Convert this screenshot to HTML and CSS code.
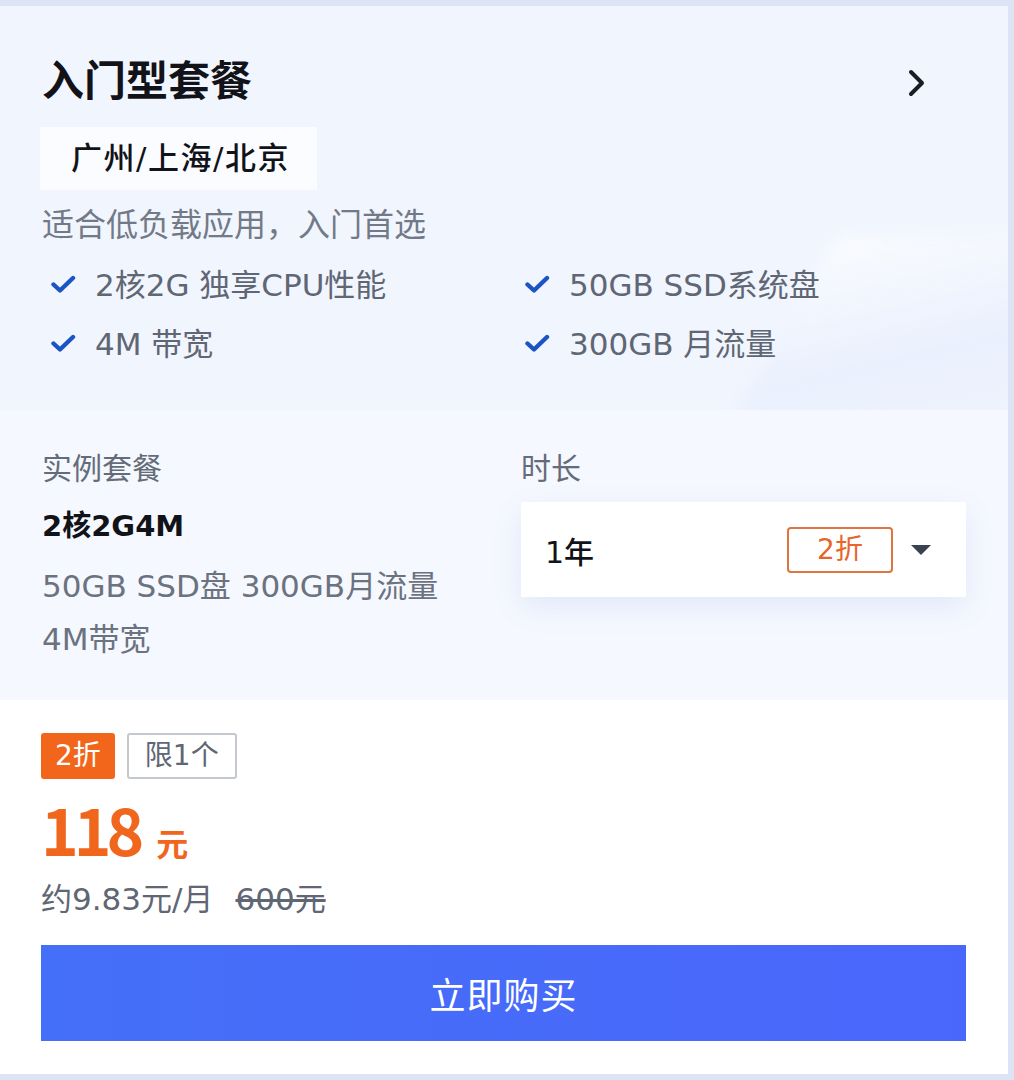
FILE: index.html
```html
<!DOCTYPE html>
<html lang="zh-CN">
    <head>
        <meta charset="UTF-8" />
        <meta name="viewport" content="width=device-width, initial-scale=1.0" />
        <title>入门型套餐</title>
        <link rel="stylesheet" href="styles.css">
    </head>
    <body>
        <div class="card">
            <section class="intro">
                <div class="title-row">
                    <h1>入门型套餐</h1>
                    <svg class="chevron" width="22" height="28" viewBox="0 0 22 28">
                        <path d="M5 3 L16 14 L5 25" fill="none" stroke="#1b1d22" stroke-width="4" stroke-linecap="round" stroke-linejoin="round" />
                    </svg>
                </div>
                <div class="region">广州/上海/北京</div>
                <p class="desc">适合低负载应用，入门首选</p>
                <ul class="features">
                    <li><svg class="check" width="26" height="18" viewBox="0 0 26 18"><path d="M3.5 9.5 L10 15.5 L23 3" fill="none" stroke="#1b55c4" stroke-width="4.4" stroke-linecap="round" stroke-linejoin="round" /></svg>2核2G 独享CPU性能</li>
                    <li><svg class="check" width="26" height="18" viewBox="0 0 26 18"><path d="M3.5 9.5 L10 15.5 L23 3" fill="none" stroke="#1b55c4" stroke-width="4.4" stroke-linecap="round" stroke-linejoin="round" /></svg>50GB SSD系统盘</li>
                    <li><svg class="check" width="26" height="18" viewBox="0 0 26 18"><path d="M3.5 9.5 L10 15.5 L23 3" fill="none" stroke="#1b55c4" stroke-width="4.4" stroke-linecap="round" stroke-linejoin="round" /></svg>4M 带宽</li>
                    <li><svg class="check" width="26" height="18" viewBox="0 0 26 18"><path d="M3.5 9.5 L10 15.5 L23 3" fill="none" stroke="#1b55c4" stroke-width="4.4" stroke-linecap="round" stroke-linejoin="round" /></svg>300GB 月流量</li>
                </ul>
            </section>

            <section class="config">
                <div class="col">
                    <div class="label">实例套餐</div>
                    <div class="spec-name">2核2G4M</div>
                    <div class="spec-detail">50GB SSD盘 300GB月流量<br />4M带宽</div>
                </div>
                <div class="col">
                    <div class="label">时长</div>
                    <div class="select">
                        <span class="select-value">1年</span>
                        <span class="select-tag">2折</span>
                        <span class="caret"></span>
                    </div>
                </div>
            </section>

            <section class="buy">
                <div class="tags">
                    <span class="tag tag-off">2折</span>
                    <span class="tag tag-limit">限1个</span>
                </div>
                <div class="price"><span class="num">118</span><span class="unit">元</span></div>
                <div class="per-month">约9.83元/月<s>600元</s></div>
                <button class="btn">立即购买</button>
            </section>
        </div>
    </body>
</html>
```

FILE: styles.css
```css
* {
    margin: 0;
    padding: 0;
    box-sizing: border-box;
}
body {
    background: #dce4f5;
    padding: 6px 6px 6px 0;
    font-family: "DejaVu Sans", "Noto Sans CJK SC", sans-serif;
}
.card {
    width: 1008px;
    height: 1068px;
    background: #fff;
    display: flex;
    flex-direction: column;
    overflow: hidden;
}

/* 上半部分 */
.intro {
    position: relative;
    height: 404px;
    padding: 55px 42px 0;
    background: #f1f5fe;
    overflow: hidden;
}
.intro::after {
    /* 右侧淡淡的装饰 */
    content: "";
    position: absolute;
    right: -40px;
    top: 230px;
    width: 280px;
    height: 240px;
    background: linear-gradient(165deg, rgba(255, 255, 255, 0.8), rgba(228, 236, 252, 0.7) 50%, rgba(241, 245, 254, 0));
    transform: skewX(-30deg);
    filter: blur(8px);
    opacity: 0.8;
}
.title-row {
    display: flex;
    align-items: center;
    justify-content: space-between;
    padding-right: 38px;
}
h1 {
    font-size: 42px;
    line-height: 42px;
    font-weight: 700;
    color: #111318;
}
.chevron {
    margin-top: 1px;
}
.region {
    display: inline-block;
    margin-top: 24px;
    height: 63px;
    line-height: 63px;
    padding: 0 27px 0 31px;
    margin-left: -2px;
    background: #fbfcff;
    font-size: 31px;
    font-weight: 500;
    letter-spacing: 1.5px;
    color: #111318;
}
.desc {
    margin-top: 15px;
    font-size: 32px;
    line-height: 40px;
    color: #737a87;
}
.features {
    position: relative;
    z-index: 1;
    list-style: none;
    margin-top: 8px;
    display: grid;
    grid-template-columns: 474px 1fr;
}
.features li {
    height: 59px;
    display: flex;
    align-items: center;
    font-size: 31px;
    color: #5f6674;
}
.check {
    margin: 2px 19px 0 8px;
}

/* 中间配置 */
.config {
    height: 290px;
    padding: 36px 42px 0;
    background: #f5f8fe;
    display: grid;
    grid-template-columns: 479px 445px;
}
.label {
    font-family: "Noto Sans CJK SC", sans-serif;
    font-size: 30px;
    line-height: 40px;
    color: #656c79;
}
.spec-name {
    margin-top: 20px;
    font-size: 29px;
    line-height: 40px;
    font-weight: 600;
    color: #111318;
}
.spec-detail {
    margin-top: 14px;
    font-size: 31px;
    line-height: 53px;
    color: #6b7280;
}
.select {
    margin-top: 16px;
    height: 95px;
    background: #fff;
    box-shadow: 0 10px 28px rgba(90, 120, 210, 0.12);
    display: flex;
    align-items: center;
    padding: 0 35px 0 24px;
}
.select-value {
    flex: 1;
    font-size: 30px;
    font-weight: 500;
    color: #111318;
}
.select-tag {
    width: 106px;
    height: 46px;
    line-height: 42px;
    text-align: center;
    border: 2px solid #e0743e;
    border-radius: 4px;
    font-size: 28px;
    color: #e8652a;
}
.caret {
    margin-left: 18px;
    width: 0;
    height: 0;
    border-left: 10px solid transparent;
    border-right: 10px solid transparent;
    border-top: 10px solid #3a4150;
}

/* 价格与购买 */
.buy {
    flex: 1;
    padding: 33px 42px 0 41px;
    background: #fff;
}
.tags {
    display: flex;
    gap: 12px;
}
.tag {
    height: 46px;
    line-height: 42px;
    padding: 0 12px;
    border-radius: 3px;
    font-size: 28px;
}
.tag-off {
    background: #f2661b;
    border: 2px solid #f2661b;
    color: #fff;
}
.tag-limit {
    border: 2px solid #c4c8cf;
    color: #5f6674;
    padding: 0 16px;
}
.price {
    margin-top: 15px;
    color: #f0661d;
    line-height: 68px;
    height: 68px;
    font-family: "Noto Sans CJK SC", sans-serif;
}
.num {
    font-size: 64px;
    font-weight: 600;
    letter-spacing: -5px;
}
.unit {
    margin-left: 17px;
    font-size: 32px;
    font-weight: 700;
}
.per-month {
    margin-top: 17px;
    font-size: 31px;
    line-height: 40px;
    color: #5f6674;
}
.per-month s {
    margin-left: 22px;
}
.btn {
    display: block;
    margin-top: 26px;
    width: 925px;
    height: 96px;
    border: none;
    background: linear-gradient(90deg, #446ff8, #4a67fb);
    color: #fff;
    font-family: "Noto Sans CJK SC", sans-serif;
    font-size: 36px;
    letter-spacing: 1px;
}
```
